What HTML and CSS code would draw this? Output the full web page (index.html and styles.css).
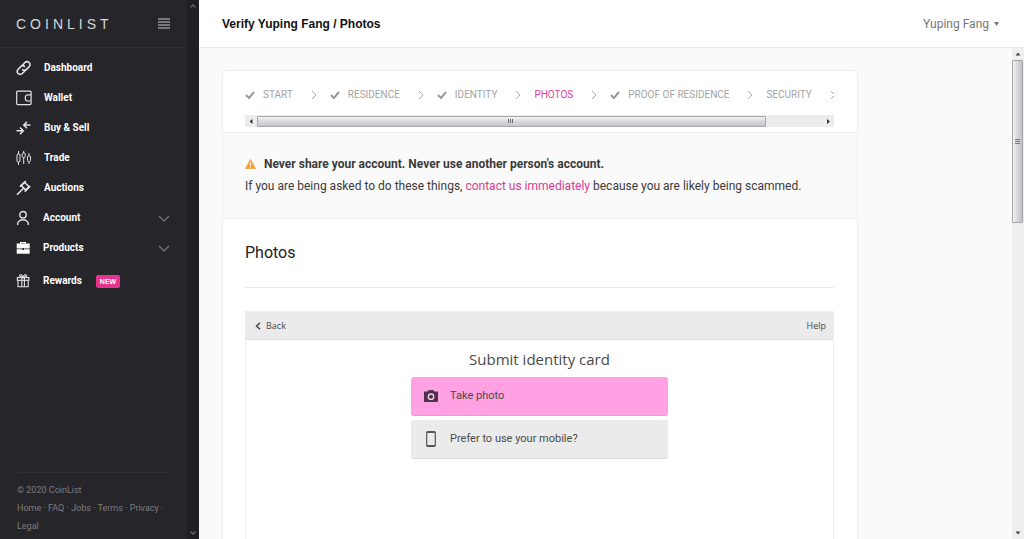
FILE: index.html
```html
<!DOCTYPE html>
<html lang="en">
<head>
<meta charset="utf-8">
<meta name="viewport" content="width=device-width, initial-scale=1">
<title>Verify Yuping Fang / Photos</title>
<link rel="stylesheet" href="styles.css">
</head>
<body>
<svg class="defs" aria-hidden="true">
  <symbol id="check" viewBox="0 0 10 8"><path d="M1 4l3 3 5-6" fill="none" stroke="currentColor" stroke-width="2"/></symbol>
  <symbol id="next" viewBox="0 0 6 10"><path d="M1 1l4 4-4 4" fill="none" stroke="currentColor"/></symbol>
  <symbol id="down" viewBox="0 0 12 7"><path d="M1 1l5 5 5-5" fill="none" stroke="currentColor" stroke-width="1.200"/></symbol>
</svg>
<div class="app">
  <aside class="sidebar">
    <div class="sidebar-body">
      <div class="brand">
        <span class="logo">COINLIST</span>
        <button class="menu" type="button" aria-label="Menu"><svg width="12" height="11" viewBox="0 0 12 11"><path d="M0 1h12M0 4h12M0 7h12M0 10h12" stroke="currentColor" stroke-width="2"/></svg></button>
      </div>
      <nav class="nav">
        <a class="nav-item" href="#"><svg class="icon" viewBox="0 0 16 16"><g fill="none" stroke="currentColor" stroke-width="1.6" stroke-linecap="round"><path d="M6.600 5l2.300-2.500a2.900 2.900 0 0 1 4.200 0 2.900 2.900 0 0 1 0 4.200l-2.600 2.700a2.900 2.900 0 0 1-3.900.2"/><path d="M8.600 11.200l-2.300 2.300a2.900 2.900 0 0 1-4.200 0 2.900 2.900 0 0 1 0-4.200l2.500-2.600a2.900 2.900 0 0 1 3.900-.3"/></g></svg><span>Dashboard</span></a>
        <a class="nav-item" href="#"><svg class="icon" viewBox="0 0 16 16"><g fill="none" stroke="currentColor" stroke-width="1.2"><rect x=".7" y="1.2" width="14.4" height="13.4" rx="1"/><path d="M15 4.8h-3.400a2.200 2.200 0 0 0-2.200 2.200v1.800a2.200 2.200 0 0 0 2.200 2.200H15"/></g></svg><span>Wallet</span></a>
        <a class="nav-item" href="#"><svg class="icon" viewBox="0 0 16 16"><g fill="none" stroke="currentColor" stroke-width="1.5"><path d="M.5 10.800h6.700M4 7.500l3.300 3.300L4 14.200"/><path d="M14.500 5H7.800M11 1.700L7.700 5 11 8.300"/></g></svg><span>Buy &amp; Sell</span></a>
        <a class="nav-item" href="#"><svg class="icon" viewBox="0 0 16 16"><g fill="none" stroke="currentColor" stroke-width="1"><rect x="1" y="4" width="3" height="8" rx="1"/><rect x="6.200" y="3" width="3" height="4.500" rx="1"/><rect x="11.500" y="6" width="3" height="5.500" rx="1"/><path d="M2.500 1v3M2.500 12v3M7.700 1v2M7.700 7.500V14M13 3v3M13 11.500V14"/></g></svg><span>Trade</span></a>
        <a class="nav-item" href="#"><svg class="icon" viewBox="0 0 16 16"><g fill="none" stroke="currentColor" stroke-width="1.600"><path d="M1 14.800l6.500-6.600"/><path d="M5.200 5.500l4.600 4.600 3.200-3.300-4.500-4.500z"/><path d="M3.900 6.700L9.800 1.200M8.700 11.600l5.600-5.600"/></g></svg><span>Auctions</span></a>
        <a class="nav-item" href="#"><svg class="icon" viewBox="0 0 16 16"><g fill="none" stroke="currentColor" stroke-width="1.400"><circle cx="7" cy="4.700" r="3.200"/><path d="M1.700 15v-1c0-2.500 2.300-4.200 5.300-4.200s5.300 1.700 5.300 4.200v1"/></g></svg><span class="tight">Account</span><svg class="expand"><use href="#down"/></svg></a>
        <a class="nav-item" href="#"><svg class="icon" viewBox="0 0 16 16"><path d="M.7 3.500H4V2h6v1.500h3.700v5H8V8H6.400v.5H.7zM5 3.500h4v-.6H5zM.7 9.300h5.700v.8H8v-.8h5.700v4.500H.7z" fill="#fff" fill-rule="evenodd"/></svg><span class="tight">Products</span><svg class="expand"><use href="#down"/></svg></a>
        <a class="nav-item nav-rewards" href="#"><svg class="icon" viewBox="0 0 16 16"><g fill="none" stroke="currentColor" stroke-width="1.100"><rect x="1.300" y="4.500" width="11.600" height="2.800"/><path d="M2 7.300v6.500h10.200V7.300M5.800 4.500v9.300M8.400 4.500v9.300M7.100 4.500C6 2 5 1.300 4 2s-.2 2.200 3.100 2.500c3.200-.3 4-1.800 3-2.500s-2 0-3 2.500z"/></g></svg><span class="tight">Rewards</span><b class="badge">NEW</b></a>
      </nav>
      <footer class="footer">
        <div>© 2020 CoinList</div>
        <div><a href="#">Home</a> · <a href="#">FAQ</a> · <a href="#">Jobs</a> · <a href="#">Terms</a> · <a href="#">Privacy</a> ·<br><a href="#">Legal</a></div>
      </footer>
    </div>
    <div class="side-scroll"><svg width="6" height="4" viewBox="0 0 6 4"><path d="M.5 3.500L3 1l2.500 2.500" fill="none" stroke="currentColor" stroke-width="1.300"/></svg><svg width="6" height="4" viewBox="0 0 6 4"><path d="M.5.5L3 3 5.500.5" fill="none" stroke="currentColor" stroke-width="1.300"/></svg></div>
  </aside>
  <div class="page">
    <header class="topbar">
      <h1>Verify Yuping Fang / Photos</h1>
      <button class="user" type="button">Yuping Fang<svg width="5" height="4" viewBox="0 0 5 4"><path d="M0 0h5L2.500 4z" fill="currentColor"/></svg></button>
    </header>
    <div class="viewport">
      <main class="content">
        <section class="card">
          <div class="progress">
            <ol class="steps">
              <li><svg class="check"><use href="#check"/></svg>START</li>
              <li><svg class="next"><use href="#next"/></svg><svg class="check"><use href="#check"/></svg>RESIDENCE</li>
              <li><svg class="next"><use href="#next"/></svg><svg class="check"><use href="#check"/></svg>IDENTITY</li>
              <li class="current"><svg class="next"><use href="#next"/></svg>PHOTOS</li>
              <li><svg class="next"><use href="#next"/></svg><svg class="check"><use href="#check"/></svg>PROOF OF RESIDENCE</li>
              <li><svg class="next"><use href="#next"/></svg>SECURITY</li>
              <li><svg class="next"><use href="#next"/></svg></li>
            </ol>
            <div class="hscroll">
              <svg width="12" height="11" viewBox="0 0 12 11"><path d="M7.500 3v5L4.500 5.500z" fill="#333"/></svg>
              <div class="htrack"><div class="hthumb"><svg width="6" height="5" viewBox="0 0 6 5"><path d="M.5 0v4M2.500 0v4M4.500 0v4" stroke="#666"/></svg></div></div>
              <svg width="12" height="11" viewBox="0 0 12 11"><path d="M5 3v5l3-2.500z" fill="#333"/></svg>
            </div>
          </div>
          <div class="warning">
            <strong class="warning-title"><svg width="11" height="10" viewBox="0 0 11 10"><path d="M5.500.3L10.800 9.700H.2z" fill="#f2a33a" stroke="#f2a33a" stroke-width=".5" stroke-linejoin="round"/><path d="M5.500 3.500v3M5.500 7.500v1.100" stroke="#fff" stroke-width="1.200"/></svg>Never share your account. Never use another person's account.</strong>
            <p>If you are being asked to do these things, <a href="#">contact us immediately</a> because you are likely being scammed.</p>
          </div>
          <div class="photos">
            <h2>Photos</h2>
            <div class="widget">
              <div class="widget-bar">
                <button type="button"><svg width="6" height="8" viewBox="0 0 6 8"><path d="M5 .7L1.500 4 5 7.300" fill="none" stroke="currentColor" stroke-width="1.500"/></svg>Back</button>
                <button type="button">Help</button>
              </div>
              <h3>Submit identity card</h3>
              <div class="choices">
                <button class="choice primary" type="button"><svg width="16" height="16" viewBox="0 0 16 16"><path d="M2 3.500h2.700L5.800 2h4.400l1.100 1.500H14c.6 0 1 .4 1 1V13c0 .6-.4 1-1 1H2c-.6 0-1-.4-1-1V4.500c0-.6.4-1 1-1z" fill="#4b3348"/><circle cx="8" cy="8.700" r="2.700" fill="#4b3348" stroke="#ffd0ee" stroke-width="1.300"/></svg>Take photo</button>
                <button class="choice" type="button"><svg width="16" height="16" viewBox="0 0 16 16"><rect x="3.700" y=".7" width="8.600" height="14.600" rx="1" fill="none" stroke="#555" stroke-width="1.200"/><path d="M4 1.500h8M4 14.500h8" stroke="#555"/></svg>Prefer to use your mobile?</button>
              </div>
            </div>
          </div>
        </section>
      </main>
      <div class="vscroll">
        <svg width="12" height="12" viewBox="0 0 12 12"><path d="M3.500 7.500h5L6 4.500z" fill="#444"/></svg>
        <div class="vtrack"><div class="vthumb"><svg width="5" height="6" viewBox="0 0 5 6"><path d="M0 .5h5M0 2.500h5M0 4.500h5" stroke="#777"/></svg></div></div>
        <svg width="12" height="12" viewBox="0 0 12 12"><path d="M3.500 4.500h5L6 7.500z" fill="#444"/></svg>
      </div>
    </div>
  </div>
</div>
</body>
</html>
```
FILE: styles.css
```css
* { box-sizing: border-box; }
body { margin: 0; background: #fafafa; color: #3a3a3a; font: 12px/18px Roboto, sans-serif; }
button { border: 0; padding: 0; background: none; color: inherit; font: inherit; cursor: pointer; }
a { color: inherit; text-decoration: none; }
h1, h2, h3, p, ol { margin: 0; padding: 0; font-weight: 400; }
svg { flex: none; display: block; }
.defs { position: absolute; width: 0; height: 0; }

.app { display: flex; height: 100vh; overflow: hidden; }
.sidebar { display: flex; flex: none; width: 199px; background: #26252a; color: #fff; }
.sidebar-body { display: flex; flex-direction: column; flex: 1; }
.brand { display: flex; align-items: center; justify-content: space-between; height: 48px; padding: 0 17px 0 16px; border-bottom: 1px solid #302f34; }
.logo { color: #d8d8da; font: 14px/18px "Liberation Sans", sans-serif; letter-spacing: 4px; }
.menu { color: #77777a; }
.nav { padding-top: 5px; }
.nav-item { display: flex; align-items: center; height: 30px; padding: 0 17px 0 16px; font: 700 10px/16px Roboto, sans-serif; }
.nav-item .icon { width: 16px; height: 16px; margin-right: 12px; color: #e4e4e6; }
.nav-item .tight { margin-left: -1px; }
.nav-item .expand { width: 12px; height: 7px; margin-left: auto; color: #77777b; }
.nav-rewards { height: 36px; }
.badge { margin-left: 14px; padding: 0 4px; border-radius: 2px; background: #e5348f; font: 700 7px/13px "Liberation Sans", sans-serif; }
.footer { margin: auto 17px 4px; padding-top: 8px; border-top: 1px solid #302f34; color: #7d7d81; font: 9px/18px Roboto, sans-serif; }
.side-scroll { display: flex; flex-direction: column; align-items: center; justify-content: space-between; width: 12px; padding: 4px 0; background: #201f24; color: #68686c; }

.page { display: flex; flex: 1; flex-direction: column; min-width: 0; }
.topbar { display: flex; align-items: center; justify-content: space-between; height: 48px; padding: 0 25px 0 23px; border-bottom: 1px solid #ececec; background: #fff; }
.topbar h1 { color: #111; font: 700 12px/18px "Liberation Sans", sans-serif; }
.user { display: flex; align-items: center; gap: 5px; color: #777; }
.viewport { display: flex; flex: 1; min-height: 0; }
.content { flex: 1; min-width: 0; padding: 22px 23px 0; overflow: hidden; }
.card { max-width: 636px; border: 1px solid #eee; border-radius: 4px; background: #fff; }

.progress { padding: 15px 23px 5px 22px; }
.steps { display: flex; overflow: hidden; color: #a3a3a3; font: 10px/18px Roboto, sans-serif; list-style: none; white-space: nowrap; }
.steps li { display: flex; flex: none; align-items: center; margin-right: 18px; }
.steps .current { color: #e0409a; }
.check { width: 10px; height: 8px; margin-right: 8px; color: #999; }
.next { width: 6px; height: 10px; margin-right: 13px; color: #aaa; }
.hscroll { display: flex; align-items: center; height: 12px; margin-top: 11px; background: #ececec; }
.htrack { flex: 1; }
.hthumb { display: flex; align-items: center; justify-content: center; width: 90%; height: 11px; border: 1px solid #a8a8ac; border-radius: 1px; background: linear-gradient(#f3f3f3, #d9d9db 50%, #c6c6ca); }

.warning { padding: 21px 23px 22px 22px; border: solid #ececec; border-width: 1px 0; background: #fafafa; }
.warning-title { display: flex; align-items: center; gap: 8px; line-height: 20px; }
.warning p { margin-top: 2px; line-height: 20px; }
.warning a { color: #dc3b95; }

.photos { padding: 23px 23px 0 22px; }
.photos h2 { padding-bottom: 23px; border-bottom: 1px solid #ececec; color: #222; font-size: 16px; line-height: 22px; }
.widget { height: 300px; margin-top: 23px; border: 1px solid #eee; color: #4a4a4a; font-family: "Open Sans", sans-serif; }
.widget-bar { display: flex; align-items: center; justify-content: space-between; height: 28px; padding: 0 7px 0 9px; border-bottom: 1px solid #dcdcdc; background: #ebebeb; font-size: 9px; }
.widget-bar button { display: flex; align-items: center; gap: 5px; }
.widget h3 { padding-top: 8px; font-size: 15px; line-height: 22px; text-align: center; }
.choices { display: grid; gap: 4px; width: 257px; max-width: 100%; margin: 7px auto 0; }
.choice { display: flex; align-items: center; gap: 11px; height: 39px; padding: 0 12px; border-bottom: 1px solid #dcdcdc; border-radius: 3px; background: #ebebeb; font: 11px/18px Roboto, sans-serif; }
.choice.primary { border-color: #f592d8; background: #ffa1e2; }

.vscroll { display: flex; flex: none; flex-direction: column; width: 12px; background: #efefef; }
.vtrack { flex: 1; }
.vthumb { display: flex; align-items: center; justify-content: center; width: 11px; height: 35%; border: 1px solid #a4a4a8; border-radius: 1px; background: linear-gradient(90deg, #f3f3f3, #d9d9db 50%, #c2c2c6); }
```
